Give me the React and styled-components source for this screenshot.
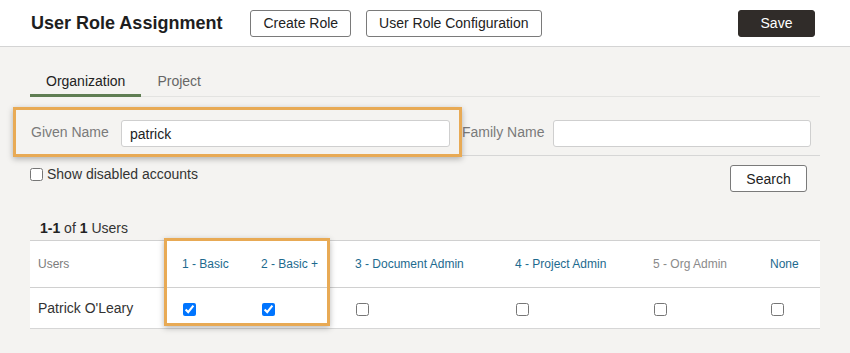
import React from 'react';
import styled, { createGlobalStyle } from 'styled-components';

const Global = createGlobalStyle`
  body {
    margin: 0;
    background: #f4f3f1;
    font-family: "Liberation Sans", Arial, sans-serif;
    color: #222;
  }
  #root { min-height: 100vh; }
`;

const Header = styled.header`
  height: 46px;
  background: #fff;
  border-bottom: 1px solid #d4d4d4;
  display: flex;
  align-items: center;
  padding: 0 35px 0 31px;
`;
const Title = styled.h1`
  margin: 0 28px 0 0;
  font-size: 18px;
  font-weight: bold;
  color: #1e1e1e;
`;
const Button = styled.button`
  height: 27px;
  min-width: ${p => p.$minW || 0}px;
  padding: 0 12px;
  margin-right: ${p => p.$gap || 0}px;
  font-family: inherit;
  font-size: 14px;
  color: #222;
  background: #fff;
  border: 1px solid #7a7a7a;
  border-radius: 3px;
  cursor: pointer;
`;
const SaveButton = styled(Button)`
  margin-left: auto;
  width: 77px;
  color: #fff;
  background: #302c29;
  border-color: #302c29;
`;

const Main = styled.main`
  padding: 0 30px;
`;
const TabBar = styled.div`
  margin-top: 18px;
  display: flex;
  border-bottom: 1px solid #e3e3e1;
`;
const Tab = styled.div`
  padding: 7px 16px 4px;
  line-height: 18px;
  font-size: 14px;
  color: ${p => (p.$active ? '#222' : '#666')};
  border-bottom: 3px solid ${p => (p.$active ? '#5f7d53' : 'transparent')};
  margin-bottom: -1px;
`;

const FormRow = styled.div`
  position: relative;
  display: flex;
  align-items: center;
  padding: 23px 0 8px;
  border-bottom: 1px solid #d6d6d6;
`;
const Label = styled.label`
  width: ${p => p.$w}px;
  padding-left: 1px;
  box-sizing: border-box;
  font-size: 14px;
  color: #7a7a7a;
  margin-top: -4px;
`;
const Input = styled.input`
  width: ${p => p.$w}px;
  height: 27px;
  box-sizing: border-box;
  margin-right: ${p => p.$gap || 0}px;
  padding: 0 8px;
  font-family: inherit;
  font-size: 14px;
  color: #222;
  background: #fff;
  border: 1px solid #cfcfcf;
  border-radius: 3px;
  outline: none;
`;
const Highlight = styled.div`
  position: absolute;
  top: ${p => p.$top}px;
  left: ${p => p.$left}px;
  width: ${p => p.$w}px;
  height: ${p => p.$h}px;
  box-sizing: border-box;
  border: 3px solid #e8aa55;
  box-shadow: 0 2px 6px rgba(0, 0, 0, 0.28);
  pointer-events: none;
`;

const OptionsRow = styled.div`
  display: flex;
  justify-content: space-between;
  align-items: flex-start;
  margin-top: 9px;
  padding-right: 13px;
`;
const CheckLabel = styled.label`
  display: flex;
  align-items: center;
  gap: 4px;
  line-height: 18px;
  font-size: 14px;
  color: #333;
`;
const Check = styled.input.attrs({ type: 'checkbox' })`
  width: 13px;
  height: 13px;
  margin: 0 0 0 ${p => p.$ml || 0}px;
  vertical-align: middle;
`;

const Count = styled.div`
  margin: 27px 0 3px 10px;
  line-height: 18px;
  font-size: 14px;
  color: #333;
  b { color: #222; }
`;

const TableWrap = styled.div`
  position: relative;
`;
const Table = styled.table`
  width: 790px;
  table-layout: fixed;
  border-collapse: collapse;
  background: #fff;
`;
const Th = styled.th`
  height: 46px;
  padding: 0 0 0 8px;
  text-align: left;
  font-size: 12px;
  font-weight: normal;
  color: ${p => (p.$tone === 'muted' ? '#8a8a8a' : p.$tone === 'plain' ? '#7c7c7c' : '#1d6a8e')};
  border-top: 1px solid #d0d0d0;
  border-bottom: 1px solid #d0d0d0;
`;
const Td = styled.td`
  height: 40px;
  padding: 0 0 0 8px;
  font-size: 14px;
  color: #333;
  border-bottom: 1px solid #d6d6d6;
  vertical-align: middle;
`;

const roles = [
  { name: '1 - Basic', w: 79, on: true },
  { name: '2 - Basic +', w: 94, on: true },
  { name: '3 - Document Admin', w: 160 },
  { name: '4 - Project Admin', w: 138 },
  { name: '5 - Org Admin', w: 117, tone: 'muted' },
  { name: 'None', w: 58 },
];

const App = () => {
  return (
    <>
      <Global />
      <Header>
        <Title>User Role Assignment</Title>
        <Button $gap={15}>Create Role</Button>
        <Button>User Role Configuration</Button>
        <SaveButton>Save</SaveButton>
      </Header>
      <Main>
        <TabBar>
          <Tab $active>Organization</Tab>
          <Tab>Project</Tab>
        </TabBar>
        <FormRow>
          <Label $w={91}>Given Name</Label>
          <Input $w={329} $gap={11} defaultValue="patrick" />
          <Label $w={92}>Family Name</Label>
          <Input $w={258} />
          <Highlight $top={10} $left={-17} $w={449} $h={50} />
        </FormRow>
        <OptionsRow>
          <CheckLabel>
            <Check />
            Show disabled accounts
          </CheckLabel>
          <Button $minW={77}>Search</Button>
        </OptionsRow>
        <Count>
          <b>1-1</b> of <b>1</b> Users
        </Count>
        <TableWrap>
          <Table>
            <colgroup>
              <col style={{ width: 144 }} />
              {roles.map(r => (
                <col key={r.name} style={{ width: r.w }} />
              ))}
            </colgroup>
            <thead>
              <tr>
                <Th $tone="plain">Users</Th>
                {roles.map(r => (
                  <Th key={r.name} $tone={r.tone}>{r.name}</Th>
                ))}
              </tr>
            </thead>
            <tbody>
              <tr>
                <Td>Patrick O'Leary</Td>
                {roles.map(r => (
                  <Td key={r.name}>
                    <Check $ml={1} defaultChecked={!!r.on} />
                  </Td>
                ))}
              </tr>
            </tbody>
          </Table>
          <Highlight $top={-2} $left={134} $w={166} $h={88} />
        </TableWrap>
      </Main>
    </>
  );
};

export default App;
